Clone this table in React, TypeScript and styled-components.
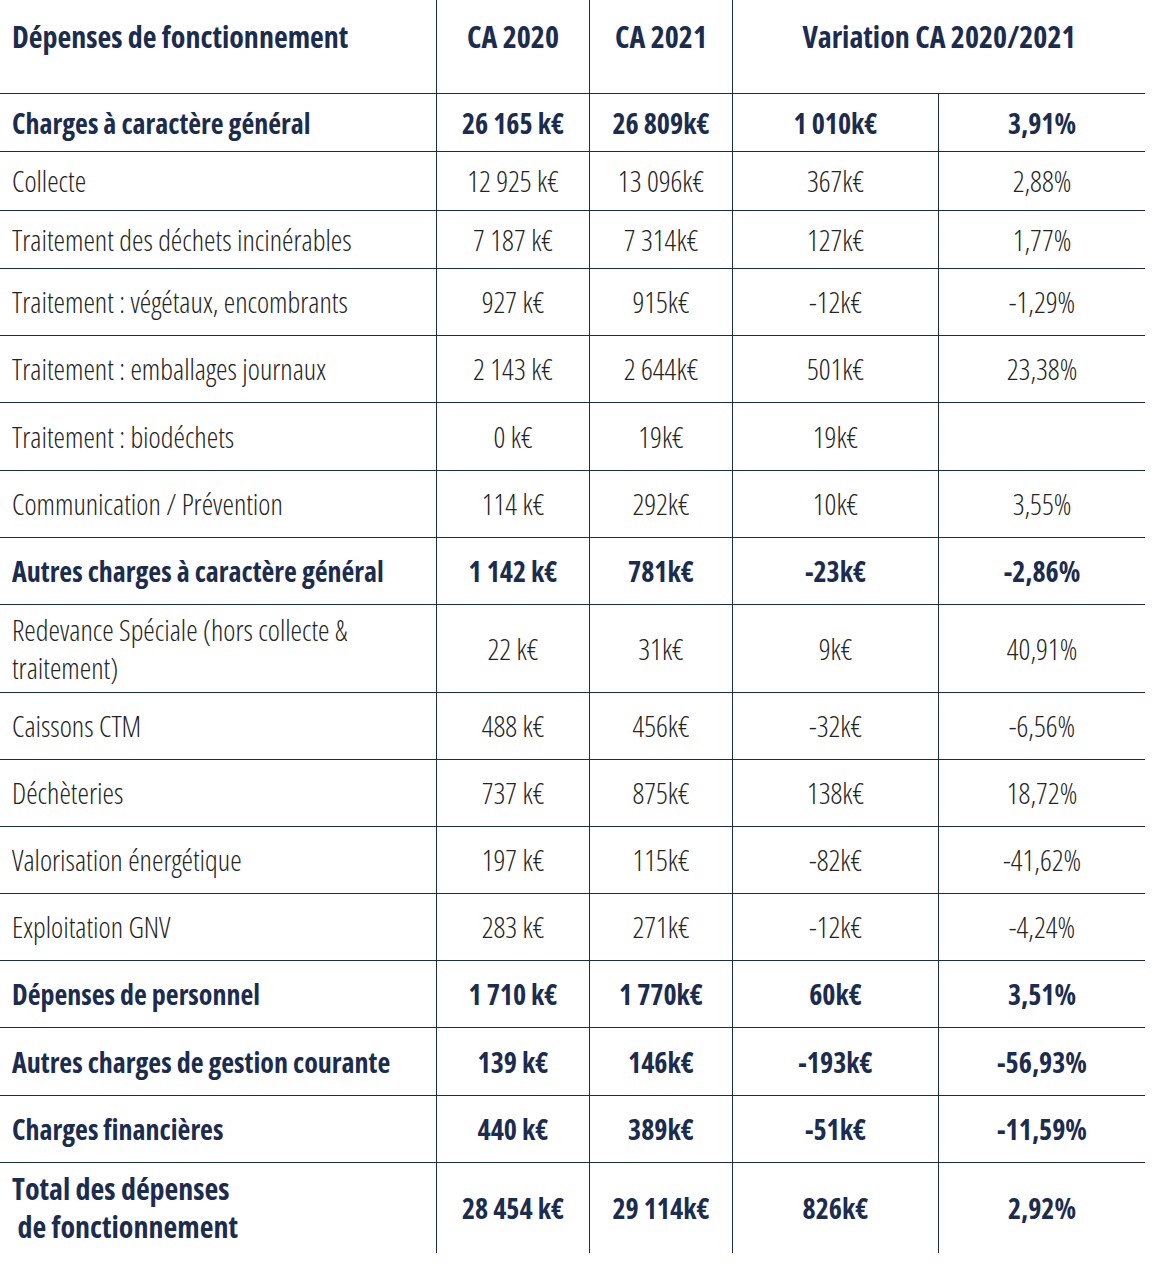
import { Fragment } from "react";
import styled, { createGlobalStyle } from "styled-components";

const GlobalStyle = createGlobalStyle`
    body {
        margin: 0;
        background: #ffffff;
        font-family: "Open Sans", "Liberation Sans", sans-serif;
    }
`;

const NAVY = "#1b2c4f";
const INK = "#242424";
const LINE = "#1b2c4f";

interface BudgetRow {
    label: React.ReactNode;
    values: string[];
    bold?: boolean;
    large?: boolean;
    height: number;
}

const rows: BudgetRow[] = [
    { label: "Charges à caractère général", values: ["26 165 k€", "26 809k€", "1 010k€", "3,91%"], bold: true, height: 58 },
    { label: "Collecte", values: ["12 925 k€", "13 096k€", "367k€", "2,88%"], height: 59 },
    { label: "Traitement des déchets incinérables", values: ["7 187 k€", "7 314k€", "127k€", "1,77%"], height: 58 },
    { label: "Traitement : végétaux, encombrants", values: ["927 k€", "915k€", "-12k€", "-1,29%"], height: 67 },
    { label: "Traitement : emballages journaux", values: ["2 143 k€", "2 644k€", "501k€", "23,38%"], height: 67 },
    { label: "Traitement : biodéchets", values: ["0 k€", "19k€", "19k€", ""], height: 68 },
    { label: "Communication / Prévention", values: ["114 k€", "292k€", "10k€", "3,55%"], height: 67 },
    { label: "Autres charges à caractère général", values: ["1 142 k€", "781k€", "-23k€", "-2,86%"], bold: true, height: 67 },
    {
        label: (
            <>
                Redevance Spéciale (hors collecte &amp;
                <br />
                traitement)
            </>
        ),
        values: ["22 k€", "31k€", "9k€", "40,91%"],
        height: 88,
    },
    { label: "Caissons CTM", values: ["488 k€", "456k€", "-32k€", "-6,56%"], height: 67 },
    { label: "Déchèteries", values: ["737 k€", "875k€", "138k€", "18,72%"], height: 67 },
    { label: "Valorisation énergétique", values: ["197 k€", "115k€", "-82k€", "-41,62%"], height: 67 },
    { label: "Exploitation GNV", values: ["283 k€", "271k€", "-12k€", "-4,24%"], height: 67 },
    { label: "Dépenses de personnel", values: ["1 710 k€", "1 770k€", "60k€", "3,51%"], bold: true, height: 67 },
    { label: "Autres charges de gestion courante", values: ["139 k€", "146k€", "-193k€", "-56,93%"], bold: true, height: 68 },
    { label: "Charges financières", values: ["440 k€", "389k€", "-51k€", "-11,59%"], bold: true, height: 67 },
    {
        label: (
            <>
                Total des dépenses
                <br />
                &nbsp;de fonctionnement
            </>
        ),
        values: ["28 454 k€", "29 114k€", "826k€", "2,92%"],
        bold: true,
        large: true,
        height: 90,
    },
];

const HEADER_HEIGHT = 94;

const Table = styled.div<{ $rows: string }>`
    display: grid;
    grid-template-columns: 436px 153px 143px 206px 207px;
    grid-template-rows: ${p => p.$rows};
    width: 1145px;
`;

const Cell = styled.div<{ $first?: boolean; $last?: boolean; $bold?: boolean; $large?: boolean }>`
    display: flex;
    align-items: center;
    justify-content: ${p => (p.$first ? "flex-start" : "center")};
    padding: ${p => (p.$first ? "0 12px" : "0 6px")};
    text-align: ${p => (p.$first ? "left" : "center")};
    border-left: ${p => (p.$first ? "none" : `1px solid ${LINE}`)};
    border-bottom: ${p => (p.$last ? "none" : `1px solid ${LINE}`)};
    font-stretch: 75%;
    font-size: ${p => (p.$large ? "30px" : p.$bold ? "28px" : "29px")};
    font-weight: ${p => (p.$bold ? 700 : 300)};
    line-height: 38px;
    color: ${p => (p.$bold ? NAVY : INK)};
    white-space: nowrap;
`;

const HeadCell = styled.div<{ $first?: boolean; $span?: number }>`
    grid-column: span ${p => p.$span ?? 1};
    display: flex;
    align-items: flex-start;
    justify-content: ${p => (p.$first ? "flex-start" : "center")};
    padding: 18px ${p => (p.$first ? "12px" : "6px")} 0;
    border-left: ${p => (p.$first ? "none" : `1px solid ${LINE}`)};
    border-bottom: 1px solid ${LINE};
    font-stretch: 75%;
    font-size: 30px;
    font-weight: 700;
    line-height: 38px;
    color: ${NAVY};
    white-space: nowrap;
`;

export default function App() {
    const template = [HEADER_HEIGHT, ...rows.map(r => r.height)].map(h => `${h}px`).join(" ");

    return (
        <>
            <GlobalStyle />
            <Table $rows={template}>
                <HeadCell $first>Dépenses de fonctionnement</HeadCell>
                <HeadCell>CA 2020</HeadCell>
                <HeadCell>CA 2021</HeadCell>
                <HeadCell $span={2}>Variation CA 2020/2021</HeadCell>

                {rows.map((row, i) => {
                    const last = i === rows.length - 1;
                    return (
                        <Fragment key={i}>
                            <Cell $first $last={last} $bold={row.bold} $large={row.large}>
                                <span>{row.label}</span>
                            </Cell>
                            {row.values.map((v, j) => (
                                <Cell key={j} $last={last} $bold={row.bold}>
                                    {v}
                                </Cell>
                            ))}
                        </Fragment>
                    );
                })}
            </Table>
        </>
    );
}
